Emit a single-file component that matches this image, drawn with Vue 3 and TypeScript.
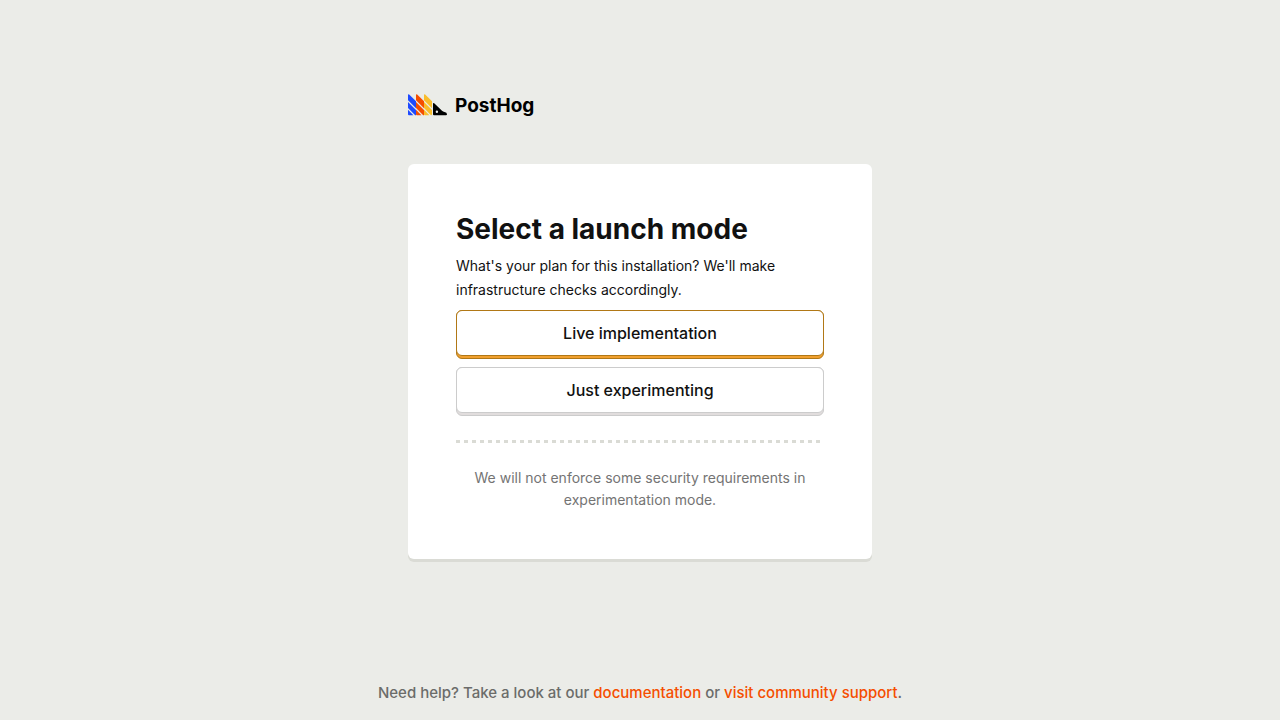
<script setup lang="ts">
import { ref } from 'vue'

type LaunchMode = 'live' | 'experimentation'

const modes: { id: LaunchMode; label: string }[] = [
  { id: 'live', label: 'Live implementation' },
  { id: 'experimentation', label: 'Just experimenting' },
]

const selected = ref<LaunchMode>('live')
</script>

<template>
  <div class="page">
    <main class="content">
      <div class="logo" role="img" aria-label="PostHog">
        <svg class="mark" viewBox="0 0 39 22" width="39" height="22" aria-hidden="true">
          <g fill="#1d4aff">
            <path d="M0 1Q0-.4 1.200.5L8 7.300V14.200L0 6.200z" />
            <path d="M0 8L8 16V21.200H7.200L0 14z" />
            <path d="M0 15.800L5.400 21.200H1Q0 21.200 0 20.200z" />
          </g>
          <g fill="#f54e00">
            <path d="M8 1Q8-.4 9.200.5L16 7.300V14.200L8 6.200z" />
            <path d="M8 8L16 16V21.200H15.200L8 14z" />
            <path d="M8 15.800L13.400 21.200H9Q8 21.200 8 20.200z" />
          </g>
          <g fill="#f9bd2b">
            <path d="M16 1Q16-.4 17.200.5L24 7.300V14.200L16 6.200z" />
            <path d="M16 8L24 16V20.200Q24 21.200 23 21.200L16 14z" />
            <path d="M16 15.800L21.400 21.200H17Q16 21.200 16 20.200z" />
          </g>
          <path
            fill="#000"
            fill-rule="evenodd"
            d="M25 9.800Q25 8.300 26.200 9.300L34 16.800Q35 17.700 36.500 17.900Q39 18.300 39 20.300Q39 21.200 38 21.200H26Q25 21.200 25 20.200zM28.900 16.500a1.200 1.200 0 1 0 0 2.400a1.200 1.200 0 1 0 0-2.400z"
          />
        </svg>
        <span class="wordmark">PostHog</span>
      </div>
      <section class="card">
        <h1>Select a launch mode</h1>
        <p class="intro">What's your plan for this installation? We'll make infrastructure checks accordingly.</p>
        <div class="modes">
          <button
            v-for="mode in modes"
            :key="mode.id"
            type="button"
            class="mode"
            :class="{ primary: selected === mode.id }"
            @click="selected = mode.id"
          >
            <span class="face">{{ mode.label }}</span>
          </button>
        </div>
        <div class="divider" role="separator"></div>
        <p class="note">We will not enforce some security requirements in experimentation mode.</p>
      </section>
    </main>
    <footer class="help">
      <p>
        Need help? Take a look at our <a href="#documentation">documentation</a> or
        <a href="#support">visit community support</a>.
      </p>
    </footer>
  </div>
</template>

<style>
body {
  margin: 0;
  background: #ebece8;
}
</style>

<style scoped>
.page {
  box-sizing: border-box;
  min-height: 100vh;
  display: flex;
  flex-direction: column;
  background: #ebece8;
  color: #111;
  font-family: Inter, 'Liberation Sans', sans-serif;
  font-size: 14px;
}
.content {
  box-sizing: border-box;
  flex: 1;
  display: flex;
  flex-direction: column;
  justify-content: center;
  width: 100%;
  max-width: 464px;
  margin: 0 auto;
}
.logo {
  display: flex;
  align-items: flex-start;
  gap: 8px;
  height: 22px;
  margin-bottom: 48px;
}
.mark {
  display: block;
}
.wordmark {
  color: #000;
  font-family: Inter, sans-serif;
  font-size: 19px;
  font-weight: 700;
  line-height: 24px;
}
.card {
  padding: 48px;
  border-radius: 6px;
  background: #fff;
  box-shadow: 0 3px 0 #dadbd5;
}
h1 {
  margin: 0 0 8px;
  font-size: 28px;
  font-weight: 700;
  line-height: 34px;
}
.intro {
  margin: 0 0 8px;
  line-height: 24px;
}
.modes {
  display: flex;
  flex-direction: column;
  gap: 8px;
}
.mode {
  display: block;
  box-sizing: border-box;
  width: 100%;
  padding: 0 0 3px;
  border: 1px solid #ccc;
  border-radius: 6px;
  background: #e1dddd;
  color: #111;
  font-family: inherit;
  font-size: 16px;
  font-weight: 500;
  line-height: 24px;
  cursor: pointer;
}
.face {
  display: block;
  margin: -1px;
  padding: 10px 16px;
  border: 1px solid #ccc;
  border-radius: 6px;
  background: #fff;
}
.mode.primary {
  border-color: #b17816;
  background: #f1a02f;
}
.primary .face {
  border-color: #b17816;
}
.divider {
  height: 3px;
  margin: 24px 0;
  background: repeating-linear-gradient(90deg, #dadbd5 0 4px, transparent 4px 8px);
}
.note {
  margin: 0;
  color: #747474;
  line-height: 22px;
  text-align: center;
}
.help {
  box-sizing: border-box;
  min-height: 67px;
  display: flex;
  align-items: flex-end;
  justify-content: center;
  padding: 0 16px 16px;
  color: #6b6c6a;
  font-size: 15px;
  font-weight: 500;
  line-height: 22px;
  text-align: center;
}
.help p {
  margin: 0;
}
.help a {
  color: #f54e00;
  text-decoration: none;
}
</style>
